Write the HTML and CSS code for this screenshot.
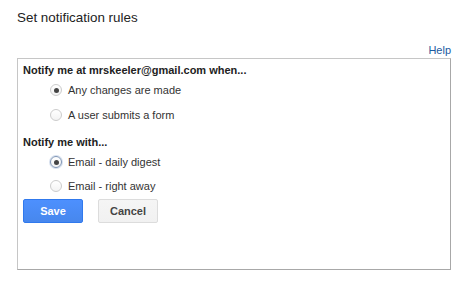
FILE: index.html
```html
<!DOCTYPE html>
<html>
<head>
<meta charset="utf-8">
<link rel="stylesheet" href="styles.css">
</head>
<body>
<div class="page">
  <h1 class="title">Set notification rules</h1>
  <div class="help-row"><a class="help" href="#">Help</a></div>
  <div class="box">
    <div class="heading first">Notify me at mrskeeler@gmail.com when...</div>
    <label class="option"><span class="radio checked"></span><span class="label">Any changes are made</span></label>
    <label class="option"><span class="radio"></span><span class="label">A user submits a form</span></label>
    <div class="heading second">Notify me with...</div>
    <label class="option"><span class="radio checked focus"></span><span class="label">Email - daily digest</span></label>
    <label class="option"><span class="radio"></span><span class="label">Email - right away</span></label>
    <div class="buttons">
      <button class="btn btn-primary">Save</button>
      <button class="btn btn-default">Cancel</button>
    </div>
  </div>
</div>
</body>
</html>
```
FILE: styles.css
```css
html, body {
  margin: 0;
  padding: 0;
  background: #ffffff;
}
body {
  font-family: "Liberation Sans", Arial, sans-serif;
  color: #222222;
}
.page {
  width: 434px;
  padding: 0 0 0 17px;
}
.title {
  font-size: 13.4px;
  font-weight: normal;
  line-height: 16px;
  margin: 0;
  padding-top: 10px;
  color: #222;
}
.help-row {
  display: flex;
  justify-content: flex-end;
  margin-top: 17px;
  height: 14px;
  line-height: 14px;
}
.help {
  font-size: 11px;
  color: #1c5aa0;
  text-decoration: none;
}
.box {
  margin-top: 1px;
  border: 1px solid #c6c6c6;
  border-right-color: #a8a8a8;
  border-bottom-color: #a8a8a8;
  padding: 3px 5px 0 5px;
  box-sizing: content-box;
  width: 422px;
  height: 207px;
}
.heading {
  font-size: 11px;
  font-weight: bold;
  line-height: 16px;
  height: 16px;
  color: #222;
}
.heading.second {
  margin-top: 7px;
}
.option {
  display: flex;
  align-items: center;
  height: 24px;
  padding-left: 27px;
  font-size: 11px;
  color: #333;
}
.option:nth-of-type(2) {
  height: 25px;
}
.radio {
  border: 1px solid #cccccc;
  border-radius: 50%;
  background: linear-gradient(#ffffff, #f3f3f3);
  box-sizing: border-box;
  display: flex;
  align-items: center;
  justify-content: center;
  flex: none;
  width: 12px;
  height: 12px;
}
.radio.checked::after {
  content: "";
  width: 5px;
  height: 5px;
  border-radius: 50%;
  background: #444;
}
.radio.focus {
  border-color: #7f95b5;
  box-shadow: 0 0 0 1px #d6e0ee;
}
.label {
  margin-left: 6px;
}
.buttons {
  display: flex;
  gap: 15px;
  margin-top: 1px;
}
.btn {
  width: 60px;
  height: 24px;
  border-radius: 2px;
  font-family: "Liberation Sans", Arial, sans-serif;
  font-size: 11px;
  font-weight: bold;
  padding: 0;
  box-sizing: border-box;
}
.btn-primary {
  background: linear-gradient(#4d90fe, #4787ed);
  border: 1px solid #3079ed;
  color: #ffffff;
}
.btn-default {
  background: linear-gradient(#f5f5f5, #f1f1f1);
  border: 1px solid #dcdcdc;
  color: #444444;
}
```
